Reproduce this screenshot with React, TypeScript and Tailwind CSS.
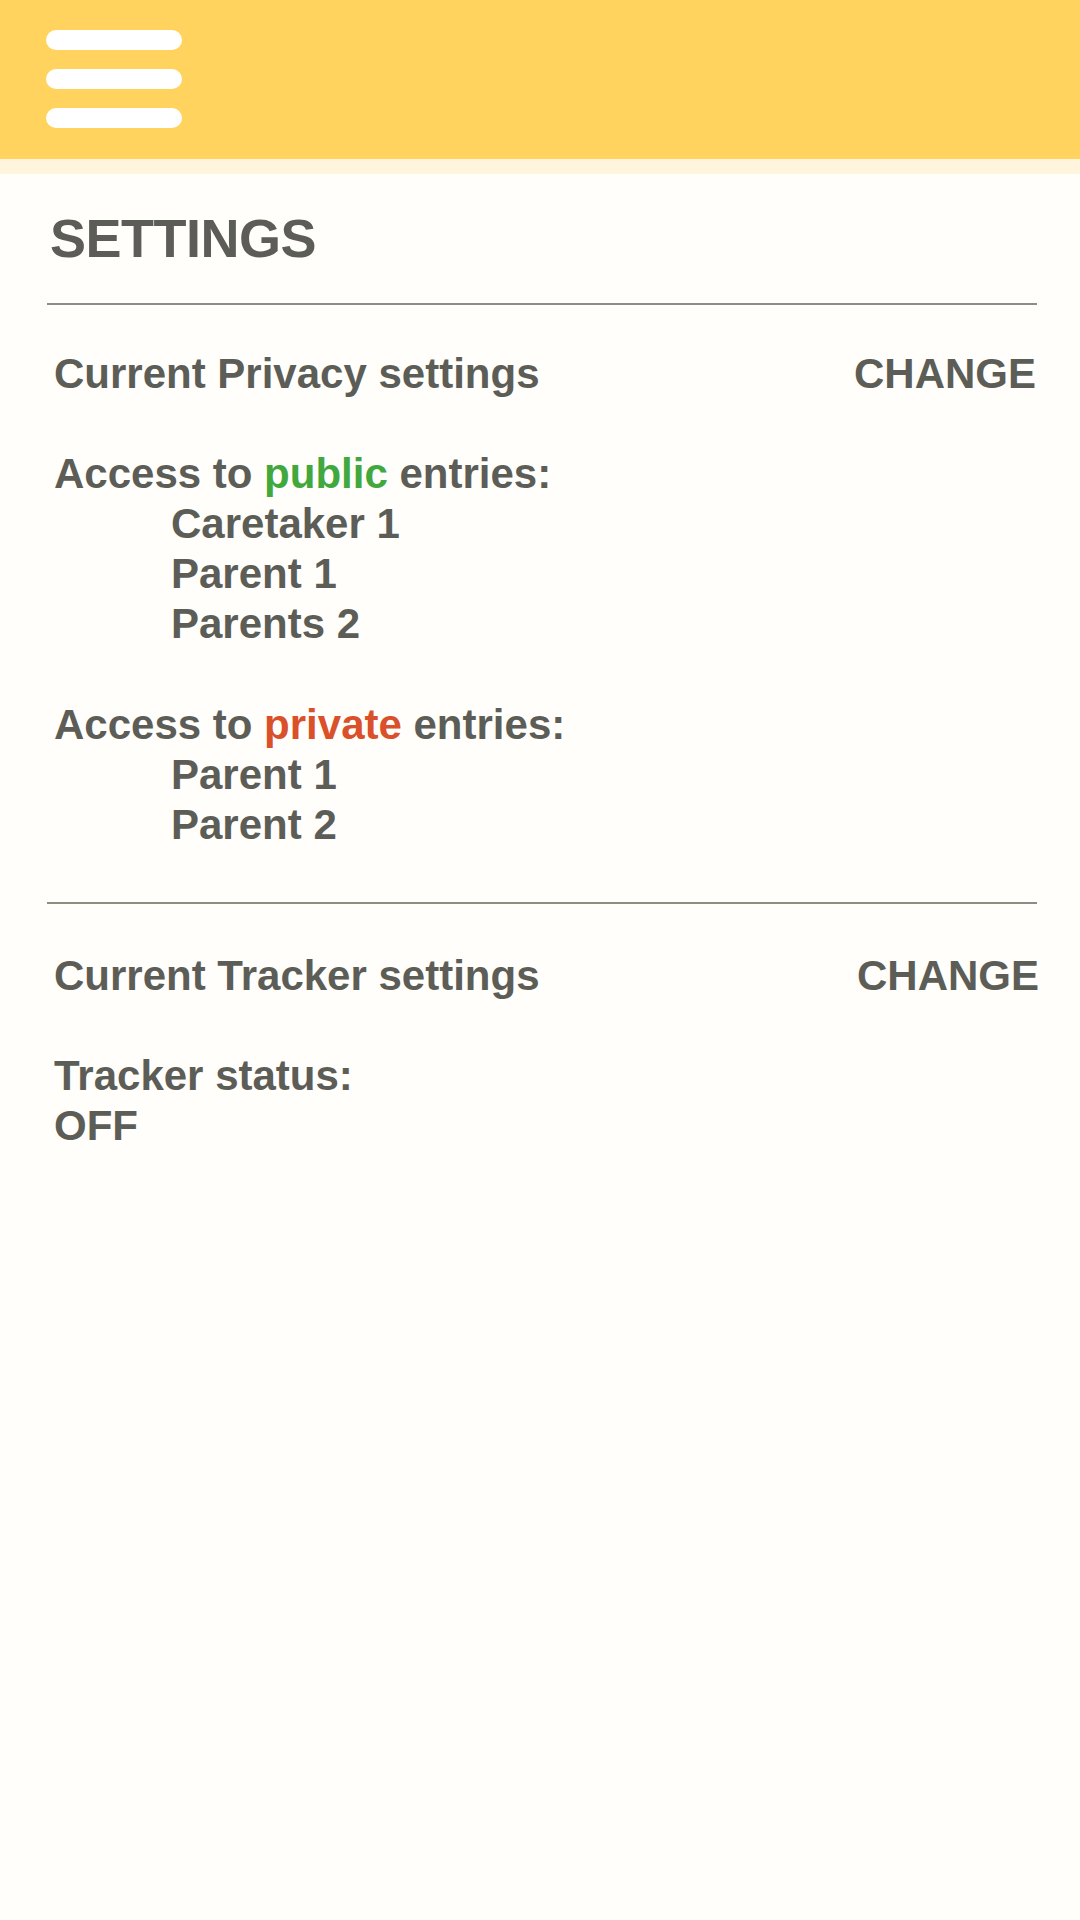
import React from "react";

const font = { fontFamily: '"Liberation Sans", Arial, Helvetica, sans-serif' };

function Row({ children, indent = false }: { children: React.ReactNode; indent?: boolean }) {
  return (
    <div className={`h-[50px] leading-[50px] whitespace-nowrap ${indent ? "pl-[124px]" : "pl-[7px]"}`}>
      {children}
    </div>
  );
}

export default function App() {
  return (
    <div className="min-h-[1920px] w-[1080px] bg-[#FFFEFA] text-[#5d5d58] font-bold" style={font}>
      <header className="h-[159px] bg-[#FFD35E] pl-[46px] pt-[30px]">
        <div className="flex flex-col gap-[19px]">
          <div className="h-[20px] w-[136px] rounded-[10px] bg-white" />
          <div className="h-[20px] w-[136px] rounded-[10px] bg-white" />
          <div className="h-[20px] w-[136px] rounded-[10px] bg-white" />
        </div>
      </header>
      <div className="h-[15px] bg-[#FFF4DC]" />

      <main className="pl-[47px] pr-[43px]">
        <h1 className="pt-[37px] pl-[3px] text-[54px] leading-[54px] tracking-[-0.5px]">SETTINGS</h1>
        <div className="mt-[38px] h-[2px] bg-[#8e8c83]" />

        <section className="pt-[44px] text-[42px]">
          <Row>
            <div className="flex justify-between">
              <span>Current Privacy settings</span>
              <span className="mr-[1px]">CHANGE</span>
            </div>
          </Row>
          <Row>{"\u00a0"}</Row>
          <Row>
            Access to <span className="text-[#41A83E]">public</span> entries:
          </Row>
          <Row indent>Caretaker 1</Row>
          <Row indent>Parent 1</Row>
          <Row indent>Parents 2</Row>
          <Row>{"\u00a0"}</Row>
          <div className="pt-[1px]">
            <Row>
              Access to <span className="text-[#D9502B]">private</span> entries:
            </Row>
            <Row indent>Parent 1</Row>
            <Row indent>Parent 2</Row>
          </div>
        </section>

        <div className="mt-[52px] h-[2px] bg-[#8e8c83]" />

        <section className="pt-[47px] text-[42px]">
          <Row>
            <div className="flex justify-between">
              <span>Current Tracker settings</span>
              <span className="-mr-[2px]">CHANGE</span>
            </div>
          </Row>
          <Row>{"\u00a0"}</Row>
          <Row>Tracker status:</Row>
          <Row>OFF</Row>
        </section>
      </main>
    </div>
  );
}
